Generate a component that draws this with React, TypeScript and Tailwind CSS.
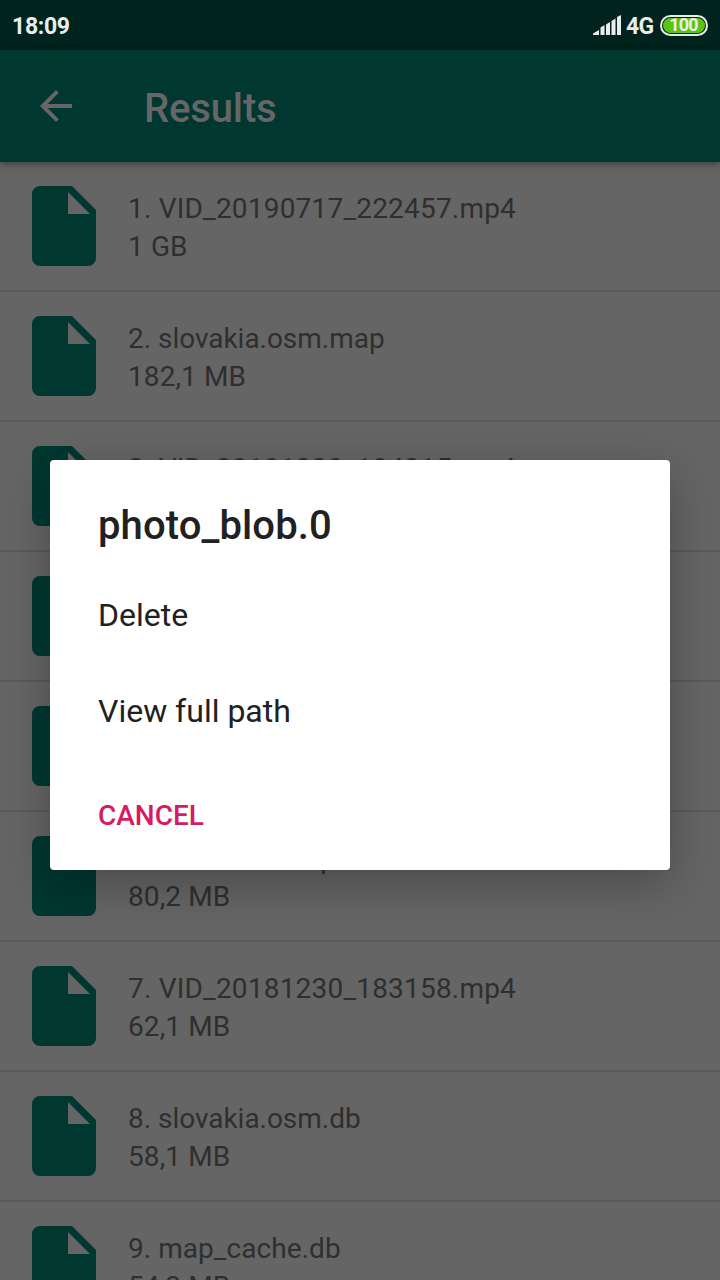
const files = [
  { name: "1. VID_20190717_222457.mp4", size: "1 GB", tracking: "tracking-[0.2px]" },
  { name: "2. slovakia.osm.map", size: "182,1 MB", tracking: "tracking-[-0.03px]" },
  { name: "3. VID_20181230_184215.mp4", size: "143,6 MB", tracking: "tracking-[0.2px]" },
  { name: "4. photo_blob.0", size: "121,4 MB", tracking: "tracking-normal" },
  { name: "5. VID_20190102_141210.mp4", size: "96,8 MB", tracking: "tracking-[0.2px]" },
  { name: "6. state.data.zip", size: "80,2 MB", tracking: "tracking-[0.53px]" },
  { name: "7. VID_20181230_183158.mp4", size: "62,1 MB", tracking: "tracking-[0.2px]" },
  { name: "8. slovakia.osm.db", size: "58,1 MB", tracking: "tracking-[-0.03px]" },
  { name: "9. map_cache.db", size: "54,2 MB", tracking: "tracking-[0.05px]" },
];

function FileIcon() {
  return (
    <svg viewBox="0 0 64 80" className="h-20 w-16 shrink-0" fill="#003731" fillRule="evenodd">
      <path d="M8 0H40L64 24V72A8 8 0 0 1 56 80H8A8 8 0 0 1 0 72V8A8 8 0 0 1 8 0ZM36 6V28H58Z" />
    </svg>
  );
}

function StatusBar() {
  return (
    <div className="flex h-[50px] shrink-0 items-center bg-[#00231d] pr-3 pl-3 text-[#e9edec]">
      <span className="pt-[3px] text-[23px] leading-none font-bold tracking-[-0.3px]">18:09</span>
      <svg viewBox="0 0 28 20" className="mr-[5px] ml-auto h-5 w-7" fill="#e9edec">
        <path d="M0 20V18.500L6 15V20ZM7.500 20V12.500L11.500 10V20ZM13 20V9.500L17 7V20ZM18.500 20V6L22.500 3.500V20ZM24 20V2L28 0V20Z" />
      </svg>
      <span className="w-7 pt-[3px] text-[23px] leading-none font-bold tracking-[-0.7px]">4G</span>
      <div className="ml-1.5 h-[21px] w-12 rounded-full border-2 border-[#e9edec] p-px">
        <div className="flex h-full items-center justify-center rounded-full bg-[#58c512] pr-px text-[18px] leading-none font-bold tracking-[-0.9px]">
          100
        </div>
      </div>
    </div>
  );
}

export default function App() {
  return (
    <div className="relative flex h-[1280px] w-[720px] flex-col overflow-hidden bg-[#656565] font-['Roboto',sans-serif]">
      <StatusBar />
      <header className="relative z-10 flex h-28 shrink-0 items-center bg-[#003731] pl-10 text-[#666666] shadow-[0_2px_8px_rgba(0,0,0,0.4)]">
        <svg viewBox="0 0 32 32" className="h-8 w-8" fill="currentColor">
          <path d="M32 14H7.660L18.840 2.820L16 0L0 16L16 32L18.820 29.180L7.660 18H32Z" />
        </svg>
        <h1 className="ml-[72px] pt-1.5 text-[40px] leading-none font-medium tracking-[-0.15px]">Results</h1>
      </header>
      <main>
        {files.map((file) => (
          <div key={file.name} className="flex h-[130px] border-b-2 border-[#5a5a5a] px-8 pt-6">
            <FileIcon />
            <div className="ml-8 pt-1 text-[28px] leading-[38px] text-[#2f2f2f]">
              <p className={file.tracking}>{file.name}</p>
              <p className="tracking-[0.1px]">{file.size}</p>
            </div>
          </div>
        ))}
      </main>
      <section
        role="dialog"
        className="absolute top-[460px] left-[50px] z-20 flex h-[410px] w-[620px] flex-col items-start rounded-[4px] bg-white px-12 text-[#212121] shadow-[0_14px_48px_rgba(0,0,0,0.27)]"
      >
        <h2 className="mt-[42px] text-[40px] leading-[47px] font-medium tracking-[0.1px]">photo_blob.0</h2>
        <button className="mt-[18px] h-24 text-[32px] leading-none">Delete</button>
        <button className="h-24 text-[32px] leading-none">View full path</button>
        <button className="mt-[21px] h-[72px] text-[28px] leading-none font-medium text-[#d81b60]">CANCEL</button>
      </section>
    </div>
  );
}
